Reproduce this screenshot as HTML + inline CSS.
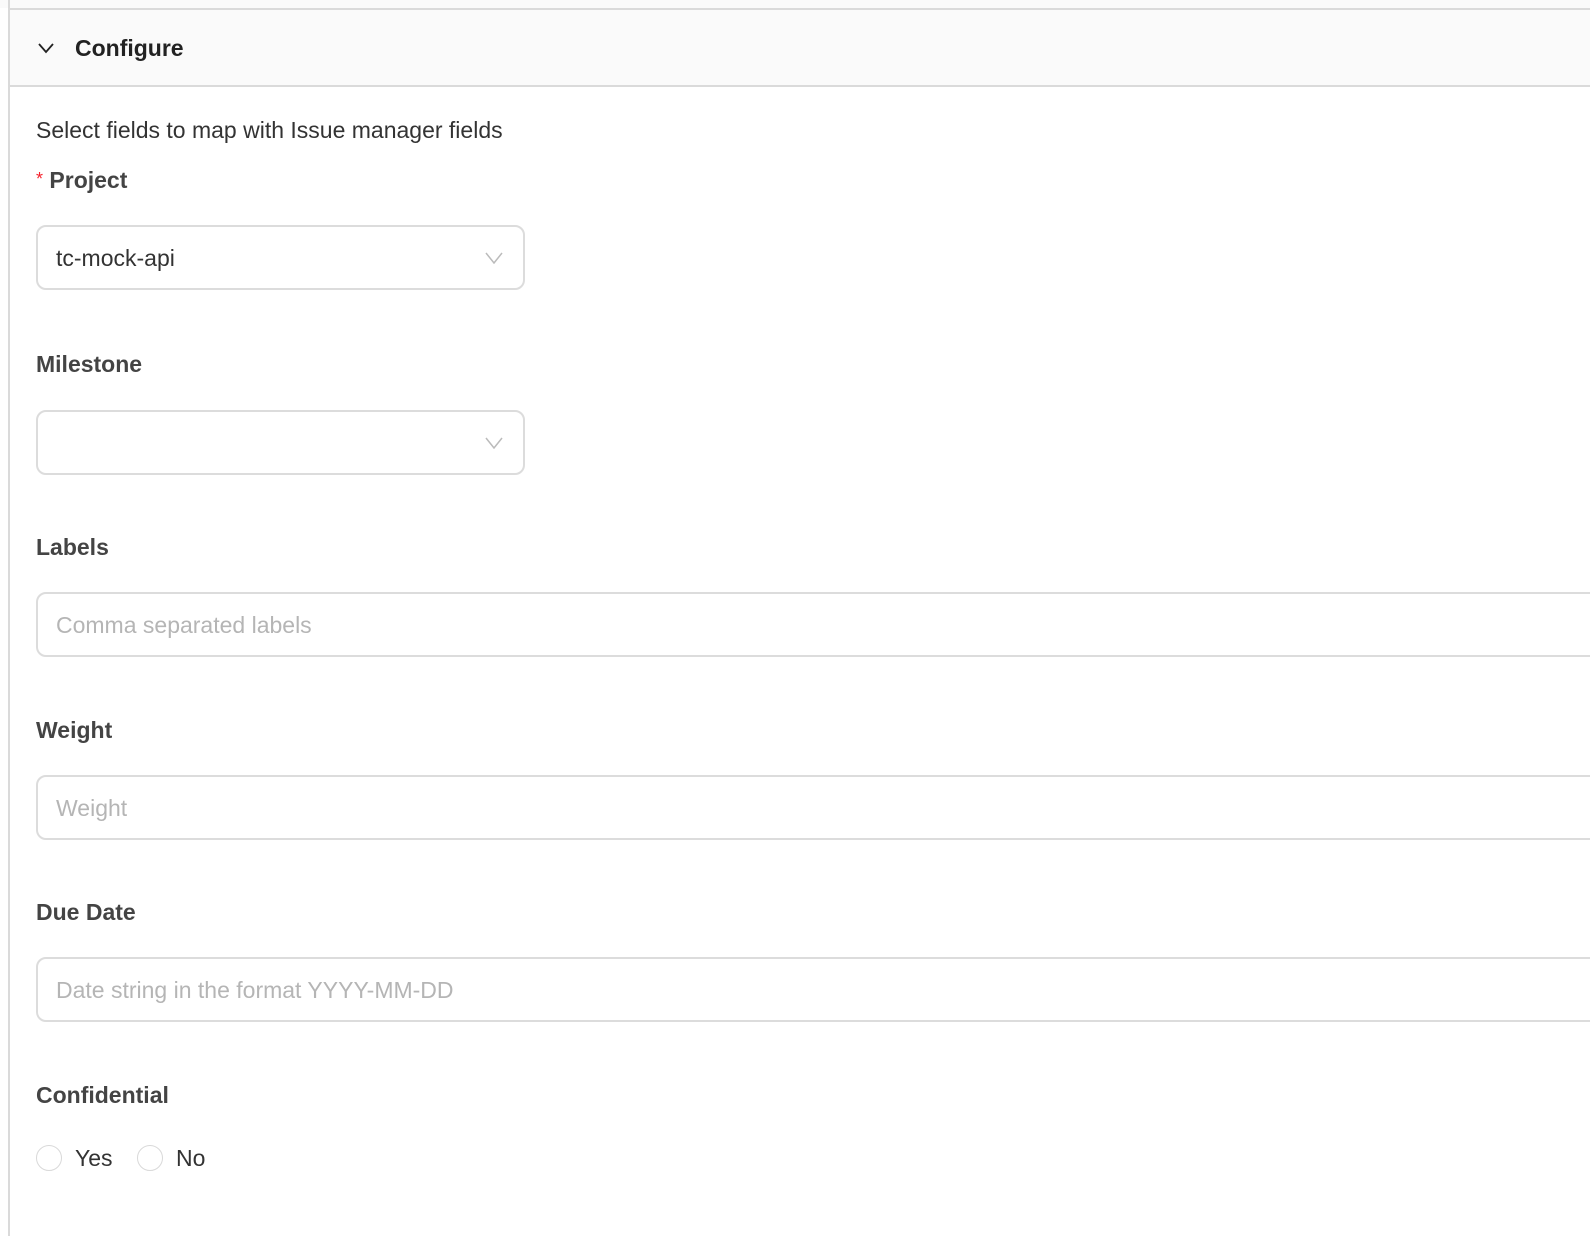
<!DOCTYPE html>
<html><head><style>
body{margin:0;width:1590px;height:1236px;background:#fff;font-family:"Liberation Sans",sans-serif;overflow:hidden;position:relative}
.a{position:absolute}
.lbl{position:absolute;left:36px;font-size:23px;font-weight:bold;color:#444;line-height:26px}
.inp{position:absolute;left:36px;border:2px solid #dcdcdc;border-radius:10px;background:#fff;box-sizing:border-box;height:65px}
.inp span{position:absolute;left:18px;top:18px;font-size:23px;line-height:26px}
.ph{color:#b5b5b5}
.chev{position:absolute;right:20px;top:25px}
.radio{position:absolute;width:26px;height:26px;border:1.5px solid #d9d9d9;border-radius:50%;box-sizing:border-box;top:1145px}
</style></head><body>
<div class="a" style="left:0;top:0;width:1590px;height:8px;background:#fafafa"></div>
<div class="a" style="left:9px;top:8px;width:1581px;height:2px;background:#dadada"></div>
<div class="a" style="left:9px;top:10px;width:1581px;height:75px;background:#fafafa"></div>
<div class="a" style="left:9px;top:85px;width:1581px;height:2px;background:#dadada"></div>
<div class="a" style="left:8px;top:0;width:2px;height:1236px;background:#dadada"></div>
<svg class="a" style="left:37px;top:42px" width="18" height="12" viewBox="0 0 18 12"><path d="M2 2 L9 10 L16 2" fill="none" stroke="#222" stroke-width="1.8"/></svg>
<div class="a" style="left:75px;top:35px;font-size:23px;font-weight:bold;color:#222;line-height:26px">Configure</div>
<div class="a" style="left:36px;top:117px;font-size:23px;color:#333;line-height:26px">Select fields to map with Issue manager fields</div>
<div class="lbl" style="top:167px"><span style="color:#f5222d;font-weight:normal;font-size:18px;position:relative;top:-3px">*</span> Project</div>
<div class="inp" style="top:225px;width:489px"><span style="color:#333">tc-mock-api</span><svg class="chev" width="18" height="12" viewBox="0 0 18 12"><path d="M1 1 L9 11 L17 1" fill="none" stroke="#bbb" stroke-width="1.5"/></svg></div>
<div class="lbl" style="top:351px">Milestone</div>
<div class="inp" style="top:410px;width:489px"><svg class="chev" width="18" height="12" viewBox="0 0 18 12"><path d="M1 1 L9 11 L17 1" fill="none" stroke="#bbb" stroke-width="1.5"/></svg></div>
<div class="lbl" style="top:534px">Labels</div>
<div class="inp" style="top:592px;width:1600px"><span class="ph">Comma separated labels</span></div>
<div class="lbl" style="top:717px">Weight</div>
<div class="inp" style="top:775px;width:1600px"><span class="ph">Weight</span></div>
<div class="lbl" style="top:899px">Due Date</div>
<div class="inp" style="top:957px;width:1600px"><span class="ph">Date string in the format YYYY-MM-DD</span></div>
<div class="lbl" style="top:1082px">Confidential</div>
<div class="radio" style="left:36px"></div>
<div class="a" style="left:75px;top:1145px;font-size:23px;color:#333;line-height:26px">Yes</div>
<div class="radio" style="left:137px"></div>
<div class="a" style="left:176px;top:1145px;font-size:23px;color:#333;line-height:26px">No</div>
</body></html>
